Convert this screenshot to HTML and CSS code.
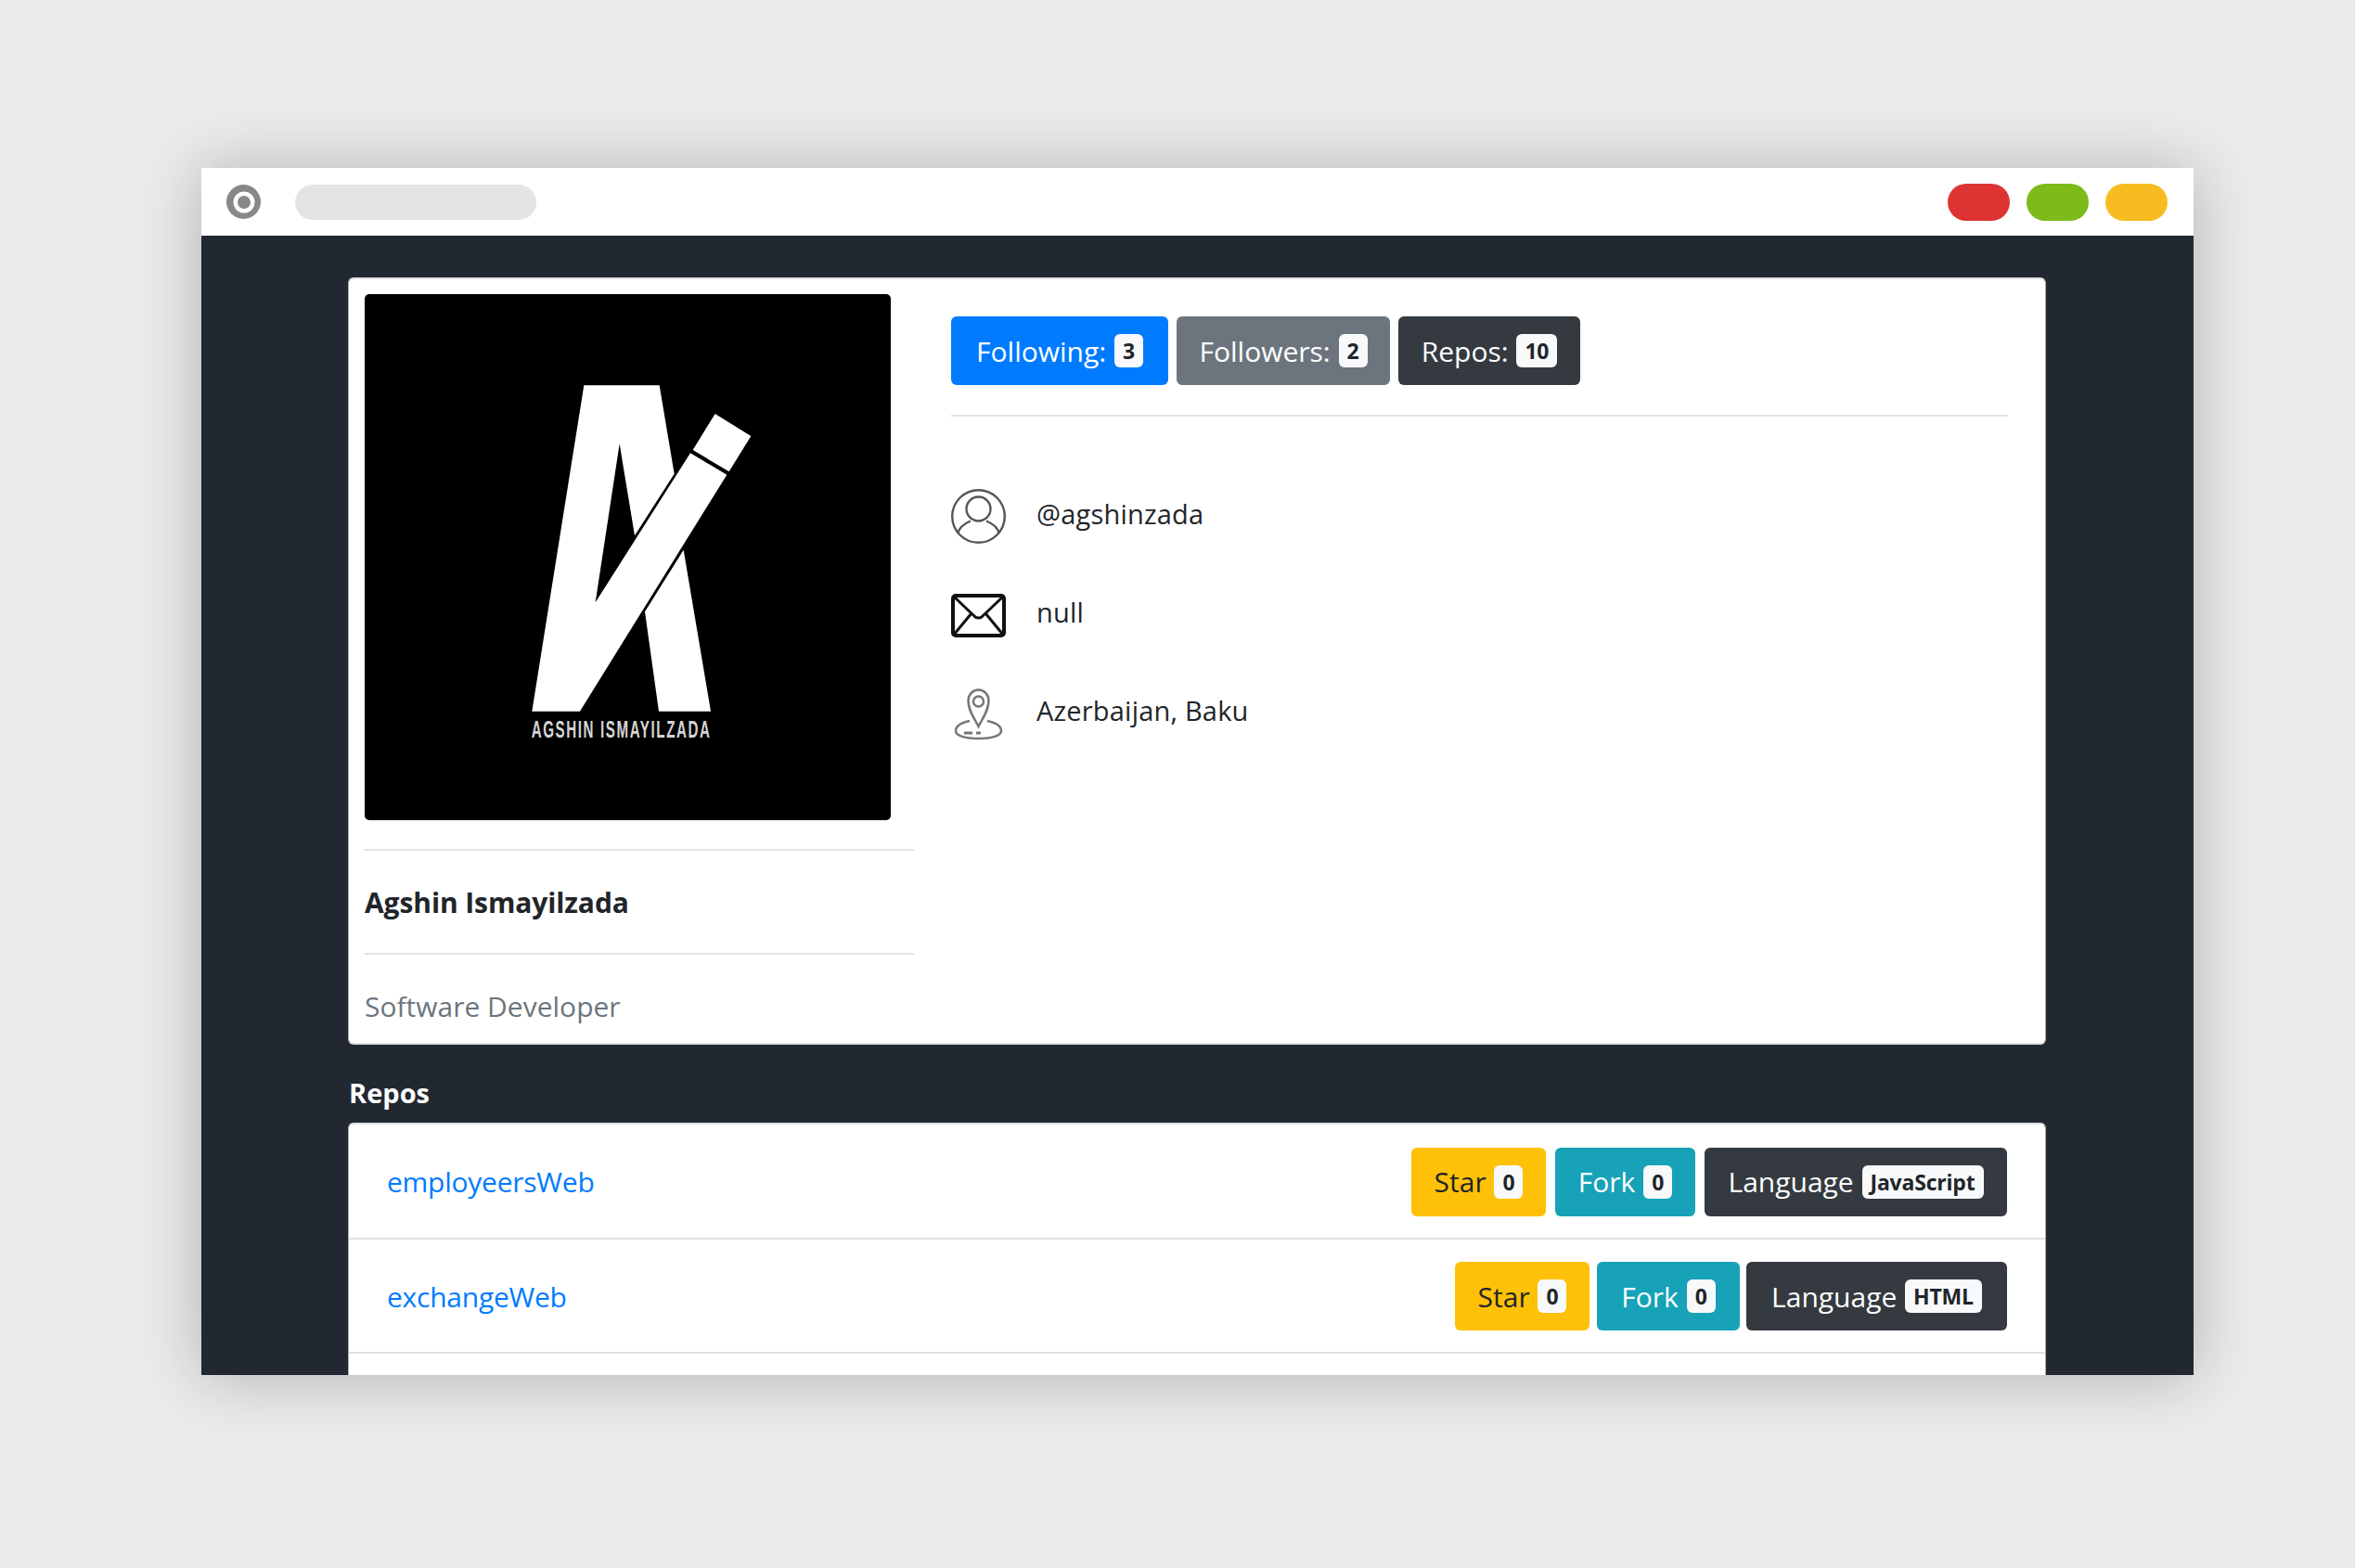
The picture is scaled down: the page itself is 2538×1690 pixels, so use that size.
FILE: index.html
```html
<!DOCTYPE html>
<html lang="en">
<head>
<meta charset="utf-8">
<title>Profile</title>
<link rel="stylesheet" href="styles.css">
</head>
<body>
<div class="window">
  <header class="topbar">
    <span class="target"></span>
    <span class="address"></span>
    <span class="lights">
      <span class="light red"></span>
      <span class="light green"></span>
      <span class="light yellow"></span>
    </span>
  </header>
  <main class="content">
    <section class="card profile">
      <div class="side">
        <svg class="avatar" viewBox="0 0 567 567" role="img" aria-label="Logo">
          <rect width="567" height="567" rx="5" fill="#000"/>
          <g transform="translate(127 73) scale(.33333)" fill="#fff">
            <polygon points="328,76 572,76 620,362 492,562 443,265 365,778 672,295 790,365 315,1130 160,1130"/>
            <polygon points="752,168 868,240 797,355 680,285"/>
            <polygon points="650,608 738,1130 570,1130 525,808"/>
            <text class="logo-text" x="158" y="1214" textLength="582" lengthAdjust="spacingAndGlyphs">AGSHIN ISMAYILZADA</text>
          </g>
        </svg>
        <hr class="rule rule-a">
        <div class="name">Agshin Ismayilzada</div>
        <hr class="rule">
        <div class="role">Software Developer</div>
      </div>
      <div class="main">
        <div class="btns">
          <span class="btn primary w-following">Following: <b class="badge">3</b></span>
          <span class="btn secondary w-followers">Followers: <b class="badge">2</b></span>
          <span class="btn dark w-repos">Repos: <b class="badge">10</b></span>
        </div>
        <hr class="rule rule-c">
        <ul class="facts">
          <li class="fact">
            <svg class="ico" viewBox="0 0 59 59" fill="none" stroke="#555" stroke-width="2.400"><circle cx="29.500" cy="29.500" r="28.300"/><circle cx="29.500" cy="21.500" r="13"/><path d="M7 48C9 41 15 37 21 34.500M52 48C50 41 44 37 38 34.500"/></svg>
            <span>@agshinzada</span>
          </li>
          <li class="fact">
            <svg class="ico" viewBox="0 -7 59 59" fill="none" stroke="#111"><rect x="2" y="2" width="55" height="43" rx="3" stroke-width="4"/><path d="M3 3l22 21a6 6 0 0 0 9 0L56 3M3 44l19-23M56 44L37 21" stroke-width="3"/></svg>
            <span>null</span>
          </li>
          <li class="fact">
            <svg class="ico" viewBox="0 -3 59 59" fill="none" stroke="#777" stroke-width="2.500"><path d="M29.500 41C25 32 18.500 24 18.500 13a11 11.500 0 0 1 22 0c0 11-6.500 19-11 28z"/><circle cx="29.500" cy="14" r="5.500"/><path d="M20 35C10 37 5 41 5 46c0 5 11 8 24.500 8S54 51 54 46c0-5-5-9-15-11"/><path d="M14 48h9M27 48h5" stroke-width="3"/></svg>
            <span>Azerbaijan, Baku</span>
          </li>
        </ul>
      </div>
    </section>
    <h2 class="heading">Repos</h2>
    <ul class="card repos">
      <li class="repo">
        <a class="repo-link" href="#">employeersWeb</a>
        <span class="btn warning w-star">Star <b class="badge">0</b></span>
        <span class="btn info w-fork">Fork <b class="badge">0</b></span>
        <span class="btn dark w-lang">Language <b class="badge">JavaScript</b></span>
      </li>
      <li class="repo tight">
        <a class="repo-link" href="#">exchangeWeb</a>
        <span class="btn warning w-star">Star <b class="badge">0</b></span>
        <span class="btn info w-fork">Fork <b class="badge">0</b></span>
        <span class="btn dark w-lang2">Language <b class="badge">HTML</b></span>
      </li>
      <li class="repo"></li>
    </ul>
  </main>
</div>
</body>
</html>
```
FILE: styles.css
```css
* { box-sizing: border-box; }
html, body { margin: 0; height: 100%; }
body {
  background: #ebebeb;
  padding: 181px 0 0 217px;
  overflow: hidden;
  font-family: "Open Sans", "Noto Sans", sans-serif;
  color: #212529;
}
.window {
  width: 2147px;
  height: 1301px;
  display: flex;
  flex-direction: column;
  overflow: hidden;
  box-shadow: 0 2px 64px rgba(0,0,0,.25);
}
.topbar {
  height: 73px;
  flex: none;
  background: #fff;
  display: flex;
  align-items: center;
  padding: 0 28px 0 27px;
}
.target {
  width: 37px; height: 37px;
  border-radius: 50%;
  background: #888;
  display: flex; align-items: center; justify-content: center;
}
.target::after {
  content: "";
  width: 14px; height: 14px;
  border-radius: 50%;
  background: #888;
  box-shadow: 0 0 0 4.5px #fff;
}
.address {
  width: 260px; height: 38px;
  margin-left: 37px;
  border-radius: 19px;
  background: #e4e4e4;
}
.lights { margin-left: auto; display: flex; gap: 18px; }
.light { width: 67px; height: 40px; border-radius: 20px; }
.red { background: #dd3333; }
.green { background: #7cbb18; }
.yellow { background: #f7bc1f; }

.content {
  flex: 1;
  background: #222831;
  padding: 45px 159px 0 158px;
  overflow: hidden;
}
.card {
  background: #fff;
  border-radius: 6px;
  border-top: 2px solid #e2e2e2;
  border-left: 1px solid #a8abaf;
  border-right: 1px solid #a8abaf;
  margin: 0;
}
.profile {
  height: 827px;
  display: flex;
  padding: 16px 40px 0 17px;
  border-bottom: 2px solid #dcdcdc;
}
.side { width: 592px; flex: none; }
.avatar { display: block; width: 567px; height: 567px; }
.rule { border: 0; height: 2px; background: #e3e3e3; margin: 0; }
.rule-a { margin-top: 31px; }
.name {
  height: 110px;
  display: flex; align-items: center;
  font-size: 30px; font-weight: 700;
  letter-spacing: -.1px;
  color: #212529;
}
.role {
  height: 110px;
  display: flex; align-items: center;
  font-size: 30px;
  color: #6c757d;
}
.main { flex: 1; margin-left: 40px; padding-top: 24px; }
.btns { display: flex; gap: 9px; }
.btn {
  display: inline-flex;
  align-items: center;
  justify-content: center;
  height: 74px;
  border-radius: 6px;
  font-size: 30px;
  color: #fff;
  white-space: pre;
}
.primary { background: #007bff; }
.secondary { background: #6c757d; }
.dark { background: #343a40; }
.warning { background: #ffc107; color: #212529; }
.info { background: #17a2b8; }
.badge {
  display: inline-flex;
  align-items: center;
  justify-content: center;
  height: 36px;
  min-width: 31px;
  padding: 0 9px;
  margin-left: 1px;
  border-radius: 6px;
  background: #f8f9fa;
  color: #212529;
  font-size: 23px;
  font-weight: 700;
  letter-spacing: -.2px;
}
.w-following { width: 234px; }
.w-followers { width: 230px; }
.w-repos { width: 196px; }
.w-star { width: 145px; }
.w-fork { width: 151px; }
.w-lang { width: 326px; }
.w-lang2 { width: 281px; }
.rule-c { margin-top: 32px; }
.facts { list-style: none; margin: 78px 0 0; padding: 0; display: flex; flex-direction: column; gap: 47px; }
.fact {
  height: 59px;
  display: flex;
  align-items: center;
  gap: 33px;
  font-size: 29px;
  letter-spacing: .2px;
  color: #212529;
}
.fact span { position: relative; top: -3px; }
.ico { width: 59px; height: 59px; flex: none; }
.heading {
  color: #fff;
  font-size: 29px;
  font-weight: 700;
  height: 84px;
  line-height: 40px;
  padding: 32px 0 0 1px;
  margin: 0;
}
.repos { list-style: none; padding: 0; }
.repo {
  display: flex;
  align-items: center;
  justify-content: flex-end;
  gap: 10px;
  height: 124px;
  padding: 1px 41px 0;
  border-bottom: 2px solid #e0e0e0;
}
.tight { gap: 7px; height: 123px; }
.tight .w-fork { width: 154px; }
.tight .warning { margin-right: 1px; }
.repo-link {
  margin-right: auto;
  color: #007bff;
  text-decoration: none;
  font-size: 30px;
  letter-spacing: -.25px;
}
.logo-text { font-family: "Liberation Sans", sans-serif; font-weight: 700; font-size: 76px; fill: #d4d4d4; letter-spacing: 8px; }
```
